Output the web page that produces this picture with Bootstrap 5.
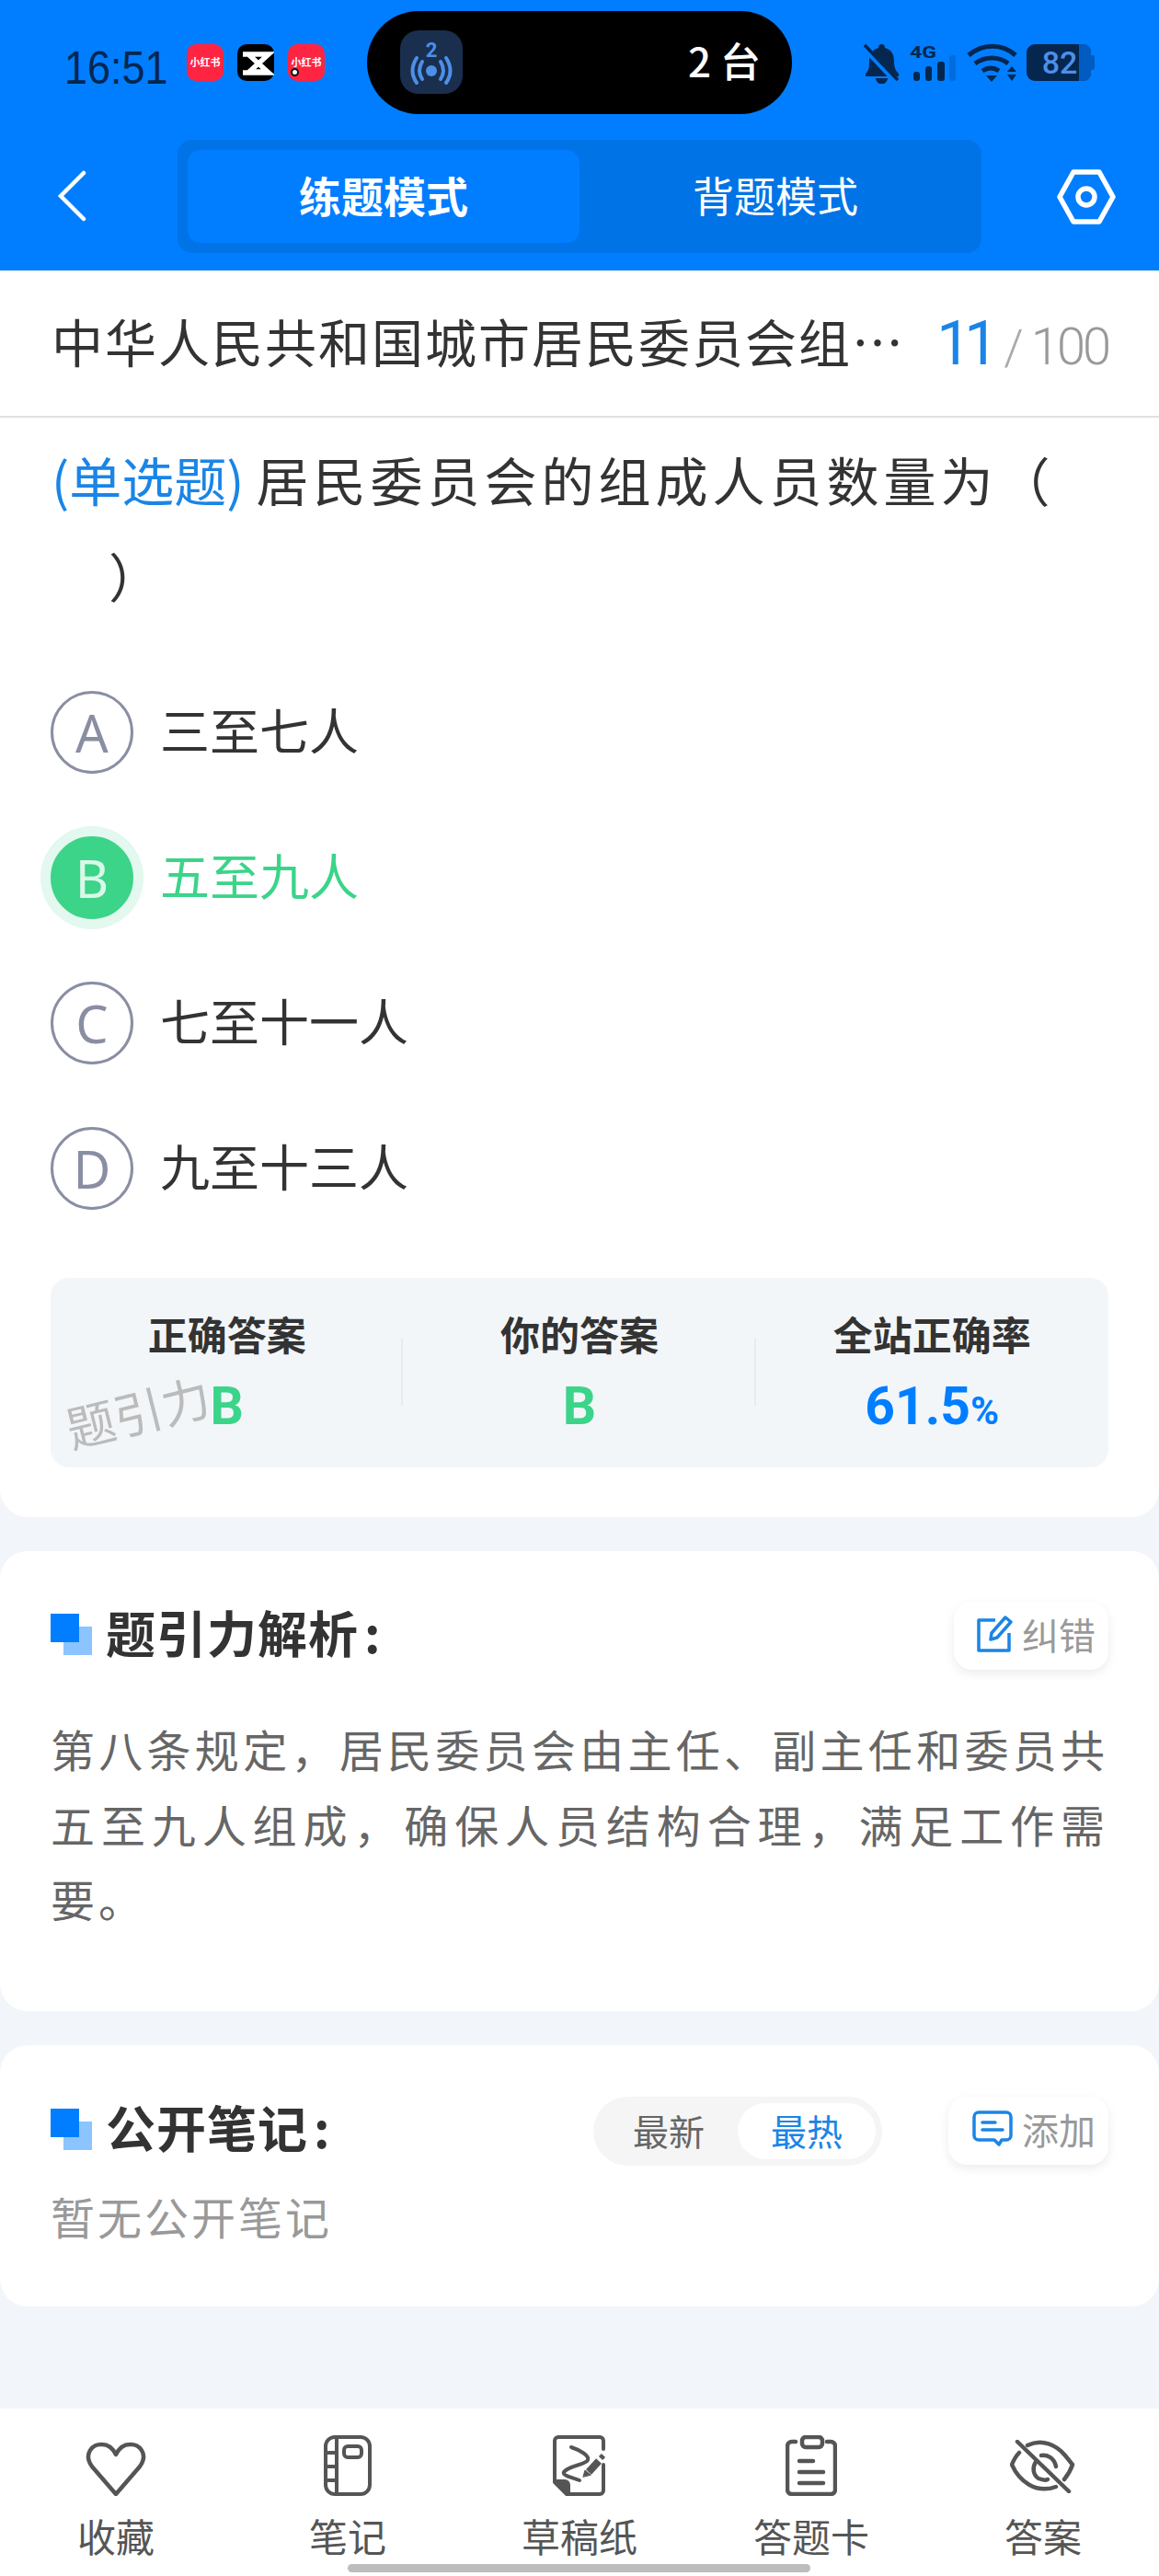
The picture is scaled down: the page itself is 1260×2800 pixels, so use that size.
<!DOCTYPE html>
<html lang="zh"><head><meta charset="utf-8">
<link href="https://cdn.jsdelivr.net/npm/bootstrap@5.3.0/dist/css/bootstrap.min.css" rel="stylesheet">
<style>
body{margin:0;width:1260px;height:2800px;background:#f2f5f9;font-family:"Noto Sans CJK SC","Noto Sans",sans-serif;position:relative;overflow:hidden;color:#333}
.topblue{background:#007eff;height:294px}
.statusline{height:138px;padding:12px 0 0 70px;position:relative}
.clockbox{width:133px;padding-top:37px}
.clock{font-family:"Liberation Sans",sans-serif;font-size:50px;line-height:1;color:#04264f;transform:scaleX(.9);transform-origin:left top;white-space:nowrap}
.apptile{width:40px;height:40px;border-radius:10px;background:#ff2442;color:#fff;font-size:11px;font-weight:700;margin-top:36px;line-height:38px;text-align:center;white-space:nowrap;position:relative}
.apptile.dark{background:#000;margin:36px 15px}
.tiledot{position:absolute;left:3px;top:26px;width:9px;height:9px;border-radius:50%;background:#fff;border:2.5px solid #111}
.island{position:absolute;left:399px;top:12px;width:462px;height:112px;border-radius:56px;background:#000;color:#fff}
.islandtile{position:absolute;left:36px;top:21px;width:68px;height:69px;border-radius:20px;background:#1a2f4d}
.islandtext{position:absolute;left:349px;top:28px;font-size:44px;font-weight:500;line-height:50px;white-space:nowrap}
.sysicons{position:absolute;left:939px;top:47px}
.modebar{height:156px;position:relative}
.backico{position:absolute;left:62px;top:47px}
.hexico{position:absolute;left:1149px;top:46px}
.modeseg{position:absolute;left:193px;top:14px;width:874px;height:123px;background:#0073e6;border-radius:16px;padding:11px}
.modetab{width:426px;height:101px;line-height:97px;text-align:center;color:#fff;font-size:45px;border-radius:14px}
.modetab.on{background:#007eff;font-weight:700;font-size:46px}
.maincard{background:#fff;height:1355px;border-radius:0 0 30px 30px;position:relative}
.titleline{height:160px;border-bottom:2px solid #e0e0e0;padding:0 55px 6px 56px;font-size:56px}
.titletxt{white-space:nowrap;letter-spacing:2px}
.countwrap{padding-top:7px}
.countnow{color:#1a85e6;font-size:66px;font-family:"Roboto",sans-serif;letter-spacing:-7px;margin-right:13px}
.countsep{color:#aaa;font-size:54px;font-weight:300;font-family:"Roboto",sans-serif;margin-right:8px}
.counttotal{color:#999;font-size:56px;font-weight:300;font-family:"Roboto",sans-serif;letter-spacing:-3px}
.qtext{padding:14px 30px 0 56px;font-size:57px;line-height:104px;letter-spacing:5px}
.qtag{color:#1a85e6;letter-spacing:0;margin-right:13px}
.optlist{padding:41px 0 0 55px}
.optrow{height:158px;font-size:54px}
.optlabel{margin-bottom:7px}
.optcircle{width:90px;height:90px;border-radius:50%;border:3px solid #8a8ea3;color:#8a8ea3;font-size:56px;font-weight:400;font-family:"Noto Sans",sans-serif;margin-right:29px;flex:none}
.optcircle.good{background:#3bd489;border-color:#3bd489;color:#d9f8e8;box-shadow:0 0 0 11px #e3f8ee}
.optgood{color:#3bd489}
.statbox{position:absolute;left:55px;top:1095px;width:1150px;height:206px;background:#f2f6f9;border-radius:20px}
.statcol{width:33.33%;text-align:center;padding-top:30px;position:relative}
.statcol+.statcol::before{content:"";position:absolute;left:-2px;top:66px;height:73px;border-left:2px solid #e9ecef}
.statlabel{font-size:43px;font-weight:700;line-height:60px;color:#333}
.statval{font-size:57px;font-weight:700;line-height:70px;margin-top:15px;font-family:"Roboto",sans-serif;color:#3bd489}
.statval.rate{color:#007eff}
.statval small{font-size:42px;font-weight:700}
.wmark{position:absolute;left:15px;top:112px;font-size:53px;color:#bbb;transform:rotate(-14deg);line-height:64px;font-weight:400;white-space:nowrap}
.infocard{background:#fff;border-radius:30px;margin-top:37px;position:relative;padding:0 55px}
.cardparse{height:500px}
.cardnotes{height:284px}
.parsehead{padding-top:55px}
.noteshead{padding-top:56px}
.twosq{width:45px;height:45px;position:relative;margin-right:15px;margin-top:4px;flex:none}
.twosq::after{content:"";position:absolute;left:14px;top:14px;width:31px;height:31px;background:#8cc4ff}
.twosq::before{content:"";position:absolute;left:0;top:0;width:31px;height:31px;background:#007eff;z-index:1}
.sechead{font-size:54px;font-weight:700;color:#333;line-height:66px;letter-spacing:1px;padding-bottom:8px}
.colonwide{margin-left:6px}
.pillbtn{height:74px;background:#fff;border-radius:20px;box-shadow:0 4px 12px rgba(0,0,0,.08);color:#999;font-size:40px;padding:0 14px 5px 25px;white-space:nowrap;gap:9px}
.notesico{width:46px}
.explain{font-size:48px;line-height:81.5px;letter-spacing:4px;color:#666;margin:0;padding-top:45px;text-align:justify}
.sorter{width:314px;height:75px;background:#f5f5f5;border-radius:38px;position:absolute;left:645px;top:56px;padding:7px;font-size:39px;color:#666}
.sortoff{width:150px;text-align:center;line-height:58px}
.sorton{width:150px;text-align:center;line-height:58px;background:#fff;border-radius:31px;color:#1a85e6}
.nonote{font-size:48px;letter-spacing:3px;color:#999;line-height:70px;padding-top:20px}
.tabbar{position:absolute;left:0;top:2618px;width:1260px;height:182px;background:#fff}
.tabitem{width:252px;text-align:center;color:#555;font-size:42px;line-height:56px}
.tabico{height:92px;display:flex;justify-content:center;align-items:flex-start;padding-top:29px;margin-bottom:18px}
.tabico.i32{padding-top:34px}
.tabico.i35{padding-top:35px}
.homebar{position:absolute;left:378px;top:2787px;width:503px;height:9px;border-radius:5px;background:#bdbdbd;z-index:5}
</style></head><body>
<div class="topblue">
 <div class="statusline d-flex">
  <div class="clockbox"><div class="clock">16:51</div></div>
  <div class="apptile">小红书</div>
  <div class="apptile dark"><svg width="40" height="40" viewBox="0 0 40 40"><path d="M6 10h28L13 29h21M6 30h28L13 11" fill="none" stroke="#fff" stroke-width="5.500"/></svg></div>
  <div class="apptile">小红书<span class="tiledot"></span></div>
  <div class="island">
   <div class="islandtile"><svg width="68" height="69" viewBox="0 0 68 69" fill="none" stroke="#4d8fe8" stroke-width="4" stroke-linecap="round"><text x="34" y="29" font-size="22" font-weight="700" fill="#4d8fe8" stroke="none" text-anchor="middle" font-family="Roboto">2</text><circle cx="34" cy="44" r="6" fill="#4d8fe8" stroke="none"/><path d="M24 34q-6 10 0 19M44 34q6 10 0 19M18 30q-9 14 0 27M50 30q9 14 0 27"/></svg></div>
   <div class="islandtext">2 台</div>
  </div>
  <svg class="sysicons" width="255" height="44" viewBox="0 0 255 44" fill="#04264f">
   <path d="M19 1a4 4 0 0 1 4 4c8 2 10 8 10 15 0 7 2 10 5 13v3H2v-3c3-3 4-5 4-13 0-8 3-13 10-15a4 4 0 0 1 3-4zM13 38h13a6.500 6.500 0 0 1-13 0z"/>
   <path d="M1 5l36 38" stroke="#007eff" stroke-width="7"/><path d="M1 2l36 38" stroke="#04264f" stroke-width="3.500"/>
   <text x="50" y="16" font-size="19" font-weight="700" font-family="Roboto" textLength="29" lengthAdjust="spacingAndGlyphs">4G</text>
   <rect x="54" y="31" width="7" height="10" rx="3"/><rect x="67" y="25" width="7" height="16" rx="3"/><rect x="80" y="20" width="8" height="21" rx="3"/><rect x="93" y="13" width="7" height="28" rx="3" opacity=".2"/>
   <g fill="none" stroke="#04264f" stroke-width="5"><path d="M114 13c16-13 36-13 51 0M121 22c11-8 26-8 36 0M129 30c6-4 12-4 18 0"/></g>
   <path d="M133 35h12l-6 7zM161 25l5 6h-10zM156 34h10l-5 7z"/>
   <rect x="177" y="1" width="70" height="40" rx="9"/><path d="M234 1h5a8 8 0 0 1 8 8v24a8 8 0 0 1-8 8h-5z" fill="#005cc0"/><path d="M247 13h1a3 3 0 0 1 3 3v10a3 3 0 0 1-3 3h-1z" fill="#005cc0"/>
   <text x="213" y="33" font-size="34" font-weight="500" fill="#4d8fe8" text-anchor="middle" font-family="Roboto">82</text>
  </svg>
 </div>
 <div class="modebar">
  <svg class="backico" width="32" height="56" viewBox="0 0 32 56" fill="none" stroke="#fff" stroke-width="4.500" stroke-linecap="round"><path d="M29 3L4 28l25 25"/></svg>
  <div class="modeseg d-flex"><div class="modetab on">练题模式</div><div class="modetab flex-grow-1">背题模式</div></div>
  <svg class="hexico" width="64" height="60" viewBox="0 0 64 60" fill="none" stroke="#fff" stroke-width="5.500" stroke-linejoin="round"><path d="M18 3h28l15 27-15 27H18L3 30z"/><circle cx="32" cy="30" r="9"/></svg>
 </div>
</div>

<div class="maincard">
 <div class="titleline d-flex align-items-center justify-content-between"><div class="titletxt">中华人民共和国城市居民委员会组…</div><div class="countwrap d-flex align-items-baseline"><span class="countnow">11</span><span class="countsep">/</span><span class="counttotal">100</span></div></div>
 <div class="qtext"><span class="qtag">(单选题)</span>居民委员会的组成人员数量为（<br>&emsp;）</div>
 <div class="optlist">
  <div class="optrow d-flex align-items-center"><div class="optcircle d-flex align-items-center justify-content-center">A</div><span class="optlabel">三至七人</span></div>
  <div class="optrow d-flex align-items-center"><div class="optcircle good d-flex align-items-center justify-content-center">B</div><span class="optlabel optgood">五至九人</span></div>
  <div class="optrow d-flex align-items-center"><div class="optcircle d-flex align-items-center justify-content-center">C</div><span class="optlabel">七至十一人</span></div>
  <div class="optrow d-flex align-items-center"><div class="optcircle d-flex align-items-center justify-content-center">D</div><span class="optlabel">九至十三人</span></div>
 </div>
 <div class="statbox d-flex">
  <div class="statcol"><div class="statlabel">正确答案</div><div class="statval">B</div></div>
  <div class="statcol"><div class="statlabel">你的答案</div><div class="statval">B</div></div>
  <div class="statcol"><div class="statlabel">全站正确率</div><div class="statval rate">61.5<small>%</small></div></div>
  <div class="wmark">题引力</div>
 </div>
</div>

<div class="infocard cardparse">
 <div class="parsehead d-flex align-items-center justify-content-between">
  <div class="d-flex align-items-center sechead"><span class="twosq"></span>题引力解析<span class="colonwide">:</span></div>
  <div class="pillbtn d-flex align-items-center"><svg width="40" height="40" viewBox="0 0 40 40" fill="none" stroke="#1a85e6" stroke-width="3.500" stroke-linejoin="round"><path d="M20 5H2v33h33V19"/><path d="M16 19L31 2l6 5-15 17-7 2z"/></svg>纠错</div>
 </div>
 <p class="explain">第八条规定，居民委员会由主任、副主任和委员共五至九人组成，确保人员结构合理，满足工作需要。</p>
</div>

<div class="infocard cardnotes">
 <div class="noteshead d-flex align-items-center justify-content-between">
  <div class="d-flex align-items-center sechead"><span class="twosq"></span>公开笔记<span class="colonwide">:</span></div>
  <div class="sorter d-flex"><div class="sortoff">最新</div><div class="sorton">最热</div></div>
  <div class="pillbtn d-flex align-items-center"><svg class="notesico" height="40" viewBox="0 0 44 40" fill="none" stroke="#1a85e6" stroke-width="3.500" stroke-linecap="round" stroke-linejoin="round"><path d="M7 2h30a5 5 0 0 1 5 5v20a5 5 0 0 1-5 5h-5l-3 5-5-5H7a5 5 0 0 1-5-5V7a5 5 0 0 1 5-5z"/><path d="M11 13h14M11 21h22"/></svg>添加</div>
 </div>
 <div class="nonote">暂无公开笔记</div>
</div>

<div class="tabbar d-flex">
 <div class="tabitem"><div class="tabico i35"><svg width="66" height="60" viewBox="0 0 66 60" fill="none" stroke="#555" stroke-width="4.500" stroke-linejoin="round"><path d="M33 58L7 28C-3 14 8 3 18 4c8 0 12 5 15 11 3-6 7-11 15-11 10-1 21 10 11 24z"/></svg></div>收藏</div>
 <div class="tabitem"><div class="tabico"><svg width="52" height="66" viewBox="0 0 52 66" fill="none" stroke="#555" stroke-width="4"><rect x="2" y="2" width="48" height="62" rx="10"/><path d="M14 2v62M2 19h12M2 34h12M2 49h12"/><rect x="22" y="12" width="19" height="12" rx="4"/></svg></div>笔记</div>
 <div class="tabitem"><div class="tabico"><svg width="58" height="66" viewBox="0 0 58 66" fill="none" stroke="#555" stroke-width="4" stroke-linejoin="round" stroke-linecap="round"><path d="M55 15V6a4 4 0 0 0-4-4H6a4 4 0 0 0-4 4v45l13 13h36a4 4 0 0 0 4-4V32"/><path d="M3 50h10a4 4 0 0 1 4 4v8z" fill="#555"/><path d="M20 13c9 3 20 9 18 14-2 5-21 6-26 13-2 4 9 6 17 9"/><path d="M39 40l11-12" stroke-width="8" stroke-linecap="butt"/><path d="M33 45l2-7 6 5z" fill="#555" stroke-width="1"/><path d="M52 25l3-3" stroke-width="6" stroke-linecap="butt"/></svg></div>草稿纸</div>
 <div class="tabitem"><div class="tabico"><svg width="56" height="66" viewBox="0 0 56 66" fill="none" stroke="#555" stroke-width="4.500" stroke-linecap="round"><path d="M11 7H7a5 5 0 0 0-5 5v47a5 5 0 0 0 5 5h42a5 5 0 0 0 5-5V12a5 5 0 0 0-5-5h-4"/><rect x="18" y="2" width="22" height="11" rx="4"/><path d="M15 28h15M15 40h26M15 52h26"/></svg></div>答题卡</div>
 <div class="tabitem"><div class="tabico i32"><svg width="72" height="58" viewBox="0 0 72 58" fill="none" stroke="#555" stroke-width="4.500" stroke-linecap="round" stroke-linejoin="round"><path d="M8 2l56 54"/><path d="M19 6c16-8 32 0 41 11l8 10c-2 6-5 11-9 16M10 14c-3 3-6 8-8 13 8 18 26 32 48 24"/><path d="M28 24c-4 6-3 14 3 18 5 2 8 2 10 1M34 17c6-1 14 2 16 12"/></svg></div>答案</div>
</div>
<div class="homebar"></div>
</body></html>
